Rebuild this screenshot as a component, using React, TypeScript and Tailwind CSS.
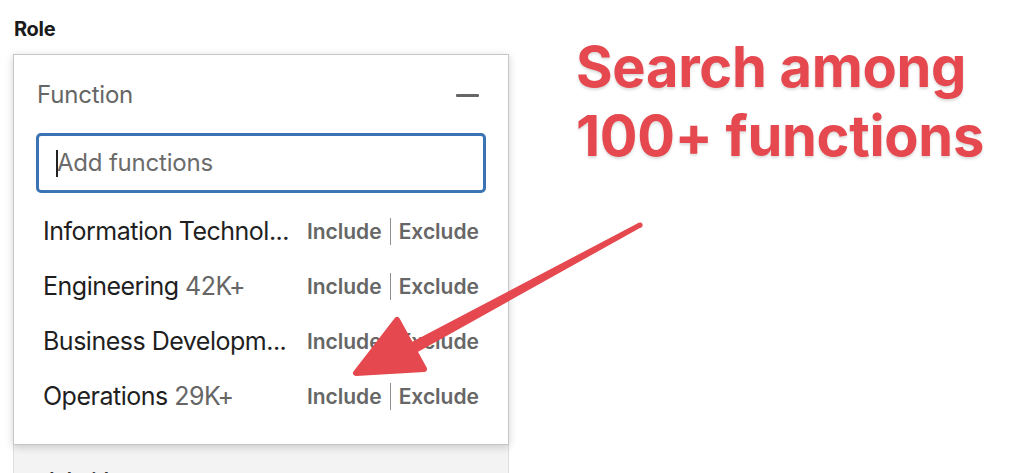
import React from "react";

const rows = [
  { name: "Information Technol...", count: "" },
  { name: "Engineering", count: "42K+" },
  { name: "Business Developm...", count: "" },
  { name: "Operations", count: "29K+" },
];

export default function App() {
  return (
    <div
      className="relative w-[1024px] h-[473px] overflow-hidden bg-white"
      style={{ fontFamily: "Inter, 'Noto Sans', sans-serif" }}
    >
      <div className="pl-[13px] pt-[17px] w-[509px]">
        <div className="text-[20px] leading-[24px] font-bold text-[#1a1a1a] pl-[1px] tracking-[-0.3px]">Role</div>
        <div className="relative z-10 mt-[13px] w-[496px] border border-[#c6c6c6] bg-white shadow-[0_2px_8px_rgba(0,0,0,0.18)]">
          <div className="flex items-center justify-between pl-[23px] pr-[29px] pt-[25px]">
            <span className="text-[24px] leading-[30px] text-[#666] tracking-[-0.2px]">Function</span>
            <span className="block w-[23px] h-[3px] bg-[#666] rounded-[1px]" />
          </div>
          <div className="mt-[23px] mx-[22px] h-[60px] rounded-[5px] border-[3px] border-[#3b73b5] flex items-center pl-[18px]">
            <span className="relative text-[24px] leading-[30px] text-[#6b6b6b] tracking-[-0.2px]">
              <span className="absolute left-[-1px] top-[2px] w-[2px] h-[27px] bg-[#222]" />
              Add functions
            </span>
          </div>
          <div className="mt-[10px] pb-[21px]">
            {rows.map((r) => (
              <div key={r.name} className="h-[55px] flex items-center pl-[29px] pr-[29px]">
                <div className="flex-1 min-w-0 text-[25px] leading-[30px] text-[#1f1f1f] whitespace-nowrap tracking-[-0.5px]">
                  {r.name}
                  {r.count && <span className="text-[#666]"> {r.count}</span>}
                </div>
                <div className="flex items-center text-[21px] leading-[26px] font-semibold text-[#666] pt-[2px]">
                  <span>Include</span>
                  <span className="mx-[8px] block w-[1px] h-[27px] bg-[#8f8f8f]" />
                  <span>Exclude</span>
                </div>
              </div>
            ))}
          </div>
        </div>
        <div className="w-[496px] h-[60px] bg-[#f3f3f4] border-x border-[#dedede] flex items-start justify-between pl-[29px] pr-[36px] pt-[23px]">
          <span className="text-[20px] leading-[24px] font-semibold text-[#333]">Job title</span>
          <span className="text-[20px] leading-[24px] text-[#444]">+</span>
        </div>
      </div>

      <div
        className="absolute left-[576px] top-[33px] text-[56px] leading-[69px] font-bold text-[#e5484e] tracking-[-0.3px] [text-shadow:0_2px_3px_rgba(0,0,0,0.15)]"
      >
        <div>Search among</div>
        <div>100+ functions</div>
      </div>

      <svg className="absolute left-0 top-0 z-20" width="1024" height="473" viewBox="0 0 1024 473">
        <path
          d="M641.2 227.2 L402.9 360.3 L397.1 349.7 L638.8 222.8 Z"
          fill="#e5484e"
        />
        <circle cx="640" cy="225" r="2.6" fill="#e5484e" />
        <polygon
          points="397,320 356,373 424,369"
          fill="#e5484e"
          stroke="#e5484e"
          strokeWidth="6"
          strokeLinejoin="round"
        />
      </svg>
    </div>
  );
}
